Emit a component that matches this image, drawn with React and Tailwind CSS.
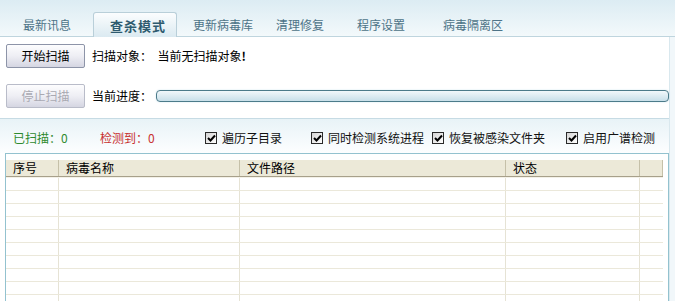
import React from "react";

const FONT = { fontFamily: '"Noto Sans CJK SC", "Noto Sans", sans-serif' };

function Tab({ label, w, pl, active }) {
  if (active) {
    return (
      <div
        className={`relative z-10 flex h-[25px] shrink-0 items-center rounded-t-[3px] border border-b-0 border-[#b9cfd9] bg-gradient-to-b from-[#fbfdfe] to-[#dbeaf1] text-[13px] font-bold tracking-[1px] text-[#2e5a6e]`}
        style={{ width: w, paddingLeft: pl }}
      >
        <span className="leading-none">{label}</span>
      </div>
    );
  }
  return (
    <div
      className="flex h-[25px] shrink-0 items-center text-[12px] text-[#4d7387]"
      style={{ width: w, paddingLeft: pl }}
    >
      <span className="leading-none">{label}</span>
    </div>
  );
}

function Btn({ children, disabled }) {
  return (
    <div
      className={`flex h-[24px] w-[79px] shrink-0 items-center justify-center rounded-[2px] border bg-gradient-to-b from-[#fdfdfe] via-[#eeeef4] to-[#d5d6e2] text-[12px] leading-none ${
        disabled
          ? "border-[#b9bcc9] text-[#a9a9b2]"
          : "border-[#8d94a8] text-black"
      }`}
    >
      {children}
    </div>
  );
}

function Check({ label, w }) {
  return (
    <div className="flex shrink-0 items-center gap-[5px]" style={{ width: w }}>
      <div className="flex h-[12px] w-[12px] items-center justify-center border border-[#2a2a2a] bg-gradient-to-br from-[#d4d4d4] to-[#ffffff]">
        <svg width="9" height="8" viewBox="0 0 9 8">
          <path d="M1 4 L3.5 6.5 L8 1.5" stroke="#000" strokeWidth="2" fill="none" />
        </svg>
      </div>
      <span className="text-[12px] leading-none text-[#111]">{label}</span>
    </div>
  );
}

const COLS = [52, 181, 266, 134, 24];
const HEAD = ["序号", "病毒名称", "文件路径", "状态", ""];

export default function App() {
  return (
    <div
      className="h-[301px] w-[675px] overflow-hidden bg-[#f1f7fa]"
      style={FONT}
    >
      {/* Tab bar */}
      <div className="flex h-[37px] items-end border-b border-[#bfd5de] bg-gradient-to-b from-[#dcecf3] to-[#f3f9fb]">
        <div className="mb-[-1px] flex items-end">
          <Tab label="最新讯息" w={93} pl={23} />
          <Tab label="查杀模式" w={84} pl={16} active />
          <Tab label="更新病毒库" w={84} pl={16} />
          <Tab label="清理修复" w={80} pl={15} />
          <Tab label="程序设置" w={86} pl={16} />
          <Tab label="病毒隔离区" w={90} pl={16} />
        </div>
      </div>

      {/* Controls */}
      <div className="w-[670px] border-r border-[#d9e8ee] bg-white">
        <div className="flex flex-col gap-[16px] border-b border-[#c6dbe4] pb-[10px] pl-[6px] pt-[7px]">
          <div className="flex items-center">
            <Btn>开始扫描</Btn>
            <span className="ml-[7px] text-[12px] leading-none text-black">
              扫描对象：&nbsp;&nbsp;当前无扫描对象<b className="font-bold">!</b>
            </span>
          </div>
          <div className="flex items-center">
            <Btn disabled>停止扫描</Btn>
            <span className="ml-[7px] text-[12px] leading-none text-black">
              当前进度：
            </span>
            <div className="ml-[4px] h-[12px] flex-1 rounded-[4px] border border-[#4c7b8a] bg-gradient-to-b from-[#f2f8fb] to-[#c8dfe9] shadow-[0_0_2px_#cfe6ee]" />
          </div>
        </div>

        {/* Stats */}
        <div className="flex h-[34px] items-center bg-gradient-to-b from-[#e8f3f7] to-[#fdfeff] pl-[13px] pt-[3px] text-[12px] leading-none">
          <div className="w-[87px] shrink-0 text-[#2f8a2f]">已扫描：0</div>
          <div className="w-[105px] shrink-0 text-[#c83030]">检测到：0</div>
          <Check label="遍历子目录" w={106} />
          <Check label="同时检测系统进程" w={121} />
          <Check label="恢复被感染文件夹" w={134} />
          <Check label="启用广谱检测" w={100} />
        </div>

        {/* Table */}
        <div className="ml-[5px] h-[200px] border border-b-0 border-[#93c2cf] bg-white pt-[6px]">
          <div className="flex h-[17px] w-[657px] border-b border-[#a7a08a] bg-[#ece9d8]">
            {HEAD.map((h, i) => (
              <div
                key={i}
                className={`flex h-full shrink-0 items-center pl-[7px] text-[12px] leading-none text-black ${
                  i > 0 ? "border-l border-[#c5c0a8]" : ""
                } ${i === 4 ? "border-r border-[#c5c0a8]" : ""}`}
                style={{ width: COLS[i] }}
              >
                {h}
              </div>
            ))}
          </div>
          <div className="h-px w-[657px] bg-[#f3f1e8]" />
          {Array.from({ length: 10 }).map((_, r) => (
            <div key={r} className="flex h-[13px] w-[657px] border-b border-[#ebe8da]">
              {COLS.map((w, i) => (
                <div
                  key={i}
                  className={`h-full shrink-0 ${i > 0 ? "border-l border-[#e6e3d5]" : ""}`}
                  style={{ width: w }}
                />
              ))}
            </div>
          ))}
        </div>
      </div>
    </div>
  );
}
